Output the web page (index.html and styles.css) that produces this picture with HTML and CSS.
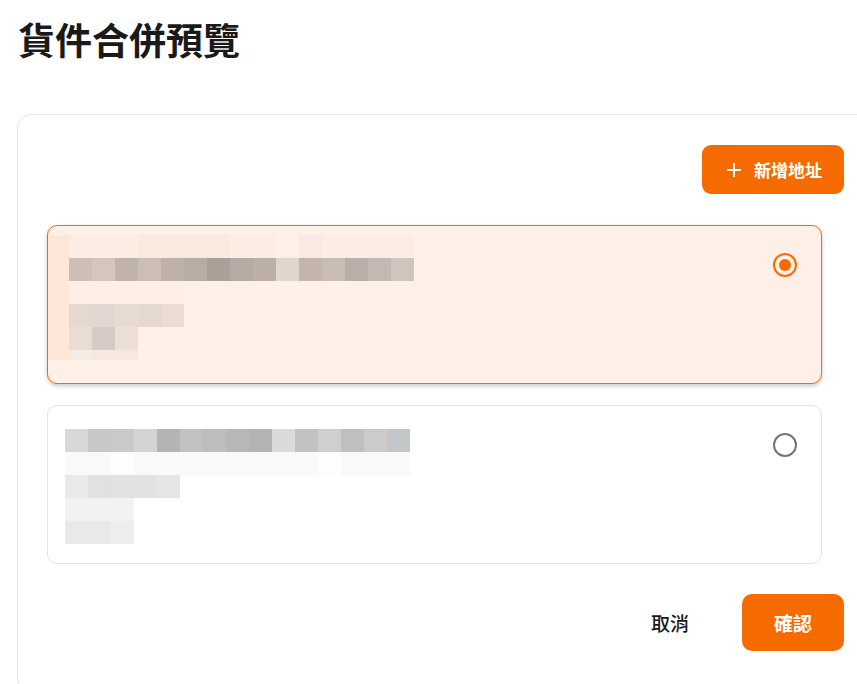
FILE: index.html
```html
<!DOCTYPE html>
<html lang="zh-Hant">
<head>
<meta charset="utf-8">
<title>貨件合併預覽</title>
<link rel="stylesheet" href="styles.css">
</head>
<body>
<h1 class="title">貨件合併預覽</h1>
<section class="panel">
  <div class="toolbar">
    <button class="btn-add" type="button">
      <svg class="plus" width="14" height="14" viewBox="0 0 14 14"><path d="M7 0v14M0 7h14" stroke="#fff" stroke-width="2" fill="none"/></svg>
      <span>新增地址</span>
    </button>
  </div>
  <div class="addr-list">
    <div class="addr selected">
      <div class="mosaic">
        <div class="strip"></div>
        <div class="rows">
          <div class="row r1"><span></span><span></span><span></span><span></span><span></span><span></span><span></span><span></span><span></span><span></span><span></span><span></span><span></span><span></span><span></span></div>
          <div class="row r2"><span></span><span></span><span></span><span></span><span></span><span></span><span></span><span></span><span></span><span></span><span></span><span></span><span></span><span></span><span></span></div>
          <div class="row r3"><span></span><span></span><span></span><span></span><span></span></div>
          <div class="row r4"><span></span><span></span><span></span><span></span><span></span></div>
          <div class="row r5"><span></span><span></span><span></span></div>
          <div class="row r6 short"><span></span><span></span><span></span></div>
        </div>
      </div>
      <span class="radio on"></span>
    </div>
    <div class="addr">
      <div class="mosaic">
        <div class="rows">
          <div class="row g1"><span></span><span></span><span></span><span></span><span></span><span></span><span></span><span></span><span></span><span></span><span></span><span></span><span></span><span></span><span></span></div>
          <div class="row g2"><span></span><span></span><span></span><span></span><span></span><span></span><span></span><span></span><span></span><span></span><span></span><span></span><span></span><span></span><span></span></div>
          <div class="row g3"><span></span><span></span><span></span><span></span><span></span></div>
          <div class="row g4"><span></span><span></span><span></span></div>
          <div class="row g5"><span></span><span></span><span></span></div>
        </div>
      </div>
      <span class="radio"></span>
    </div>
  </div>
  <div class="actions">
    <button class="btn-text" type="button">取消</button>
    <button class="btn-primary" type="button">確認</button>
  </div>
</section>
</body>
</html>
```

FILE: styles.css
```css
html, body {
  margin: 0;
  padding: 0;
  overflow: hidden;
  background: #ffffff;
}
body {
  padding: 0 0 0 17px;
  font-family: "Noto Sans CJK TC", "Noto Sans", sans-serif;
  color: #1a1a1a;
}
.title {
  margin: 18px 0 53px 1px;
  font-size: 37px;
  line-height: 43px;
  font-weight: 700;
  color: #1a1a1a;
}
.panel {
  box-sizing: border-box;
  width: 857px;
  border: 1px solid #e4e4e4;
  border-radius: 14px;
  padding: 30px 29px 40px 29px;
}
.toolbar {
  display: flex;
  justify-content: flex-end;
}
button {
  font-family: inherit;
  border: none;
  cursor: pointer;
}
.btn-add {
  display: flex;
  align-items: center;
  gap: 13px;
  height: 49px;
  padding: 0 22px 0 25px;
  background: #f56b00;
  color: #ffffff;
  border-radius: 9px;
  font-size: 17px;
  font-weight: 700;
}
.addr-list {
  display: flex;
  flex-direction: column;
  gap: 21px;
  margin: 31px 22px 0 0;
}
.addr {
  position: relative;
  box-sizing: border-box;
  height: 159px;
  border: 1px solid #e3e3e3;
  border-radius: 10px;
  background: #ffffff;
  padding: 23px 0 0 17px;
}
.addr.selected {
  border-color: #f26b10;
  background: #fff0e7;
  padding: 9px 0 0 0;
  box-shadow: 0 2px 4px rgba(0, 0, 0, 0.22);
}
.mosaic {
  display: flex;
}
.strip {
  width: 21px;
  height: 125px;
  background: #ffe7d8;
}
.rows {
  display: flex;
  flex-direction: column;
}
.row {
  display: flex;
}
.row span {
  width: 23px;
  height: 23px;
}
.row.short span {
  height: 10px;
}
/* selected card mosaic */
.r1 span { background: #fbede4; }
.r1 span:nth-child(4), .r1 span:nth-child(5), .r1 span:nth-child(6), .r1 span:nth-child(7) { background: #f9e9df; }
.r1 span:nth-child(10) { background: #fdf0e7; }
.r1 span:nth-child(11) { background: #fae9e2; }
.r2 span:nth-child(1) { background: #cbbfb8; }
.r2 span:nth-child(2) { background: #d4c6bd; }
.r2 span:nth-child(3) { background: #bfb3ac; }
.r2 span:nth-child(4) { background: #cabeb7; }
.r2 span:nth-child(5) { background: #bdb1aa; }
.r2 span:nth-child(6) { background: #b7aca6; }
.r2 span:nth-child(7) { background: #ab9f99; }
.r2 span:nth-child(8) { background: #b5aaa4; }
.r2 span:nth-child(9) { background: #bbafa8; }
.r2 span:nth-child(10) { background: #e2d5cc; }
.r2 span:nth-child(11) { background: #c1b5ae; }
.r2 span:nth-child(12) { background: #c8bcb5; }
.r2 span:nth-child(13) { background: #baaea9; }
.r2 span:nth-child(14) { background: #c4b8b2; }
.r2 span:nth-child(15) { background: #cfc5be; }
.r3 span { background: #feefe6; }
.r4 span:nth-child(1) { background: #e5d8cf; }
.r4 span:nth-child(2) { background: #e2d6d0; }
.r4 span:nth-child(3) { background: #e6dad2; }
.r4 span:nth-child(4) { background: #e5d8cf; }
.r4 span:nth-child(5) { background: #eadcd3; }
.r5 span:nth-child(1) { background: #e8dcd4; }
.r5 span:nth-child(2) { background: #d7cbc5; }
.r5 span:nth-child(3) { background: #ebdfd7; }
.r6 span { background: #f4e8e1; }
.r6 span:nth-child(1) { background: #f6ebe4; }
/* second card mosaic */
.g1 span:nth-child(1) { background: #d8d8d7; }
.g1 span:nth-child(2) { background: #c8c8c8; }
.g1 span:nth-child(3) { background: #c9cacc; }
.g1 span:nth-child(4) { background: #d4d4d3; }
.g1 span:nth-child(5) { background: #b4b4b4; }
.g1 span:nth-child(6) { background: #c2c1c0; }
.g1 span:nth-child(7) { background: #bdbdbd; }
.g1 span:nth-child(8) { background: #b7b7b6; }
.g1 span:nth-child(9) { background: #b3b3b3; }
.g1 span:nth-child(10) { background: #d9dadc; }
.g1 span:nth-child(11) { background: #c2c2c1; }
.g1 span:nth-child(12) { background: #cfcfcf; }
.g1 span:nth-child(13) { background: #c1c0bf; }
.g1 span:nth-child(14) { background: #cbcbca; }
.g1 span:nth-child(15) { background: #c3c6c8; }
.g2 span { background: #f9f9f9; }
.g2 span:nth-child(3), .g2 span:nth-child(12) { background: #fdfdfd; }
.g3 span:nth-child(1) { background: #e9e9e8; }
.g3 span:nth-child(2) { background: #e1e1e1; }
.g3 span:nth-child(3) { background: #e2e2e2; }
.g3 span:nth-child(4) { background: #e2e2e2; }
.g3 span:nth-child(5) { background: #e5e5e5; }
.g4 span { background: #f2f2f2; }
.g5 span:nth-child(1) { background: #e9e9e9; }
.g5 span:nth-child(2) { background: #e8e9e9; }
.g5 span:nth-child(3) { background: #ededed; }
.radio {
  position: absolute;
  top: 27px;
  right: 24px;
  box-sizing: border-box;
  width: 24px;
  height: 24px;
  border: 2px solid #757575;
  border-radius: 50%;
}
.radio.on {
  border-color: #f56b00;
}
.radio.on::after {
  content: "";
  position: absolute;
  left: 4px;
  top: 4px;
  width: 12px;
  height: 12px;
  border-radius: 50%;
  background: #f56b00;
}
.actions {
  display: flex;
  justify-content: flex-end;
  align-items: center;
  gap: 30px;
  margin-top: 30px;
}
.btn-text {
  height: 57px;
  padding: 0 23px;
  background: transparent;
  color: #1a1a1a;
  font-size: 19px;
  font-weight: 500;
}
.btn-primary {
  height: 57px;
  padding: 0 32px;
  background: #f56b00;
  color: #ffffff;
  border-radius: 10px;
  font-size: 19px;
  font-weight: 700;
}
```
